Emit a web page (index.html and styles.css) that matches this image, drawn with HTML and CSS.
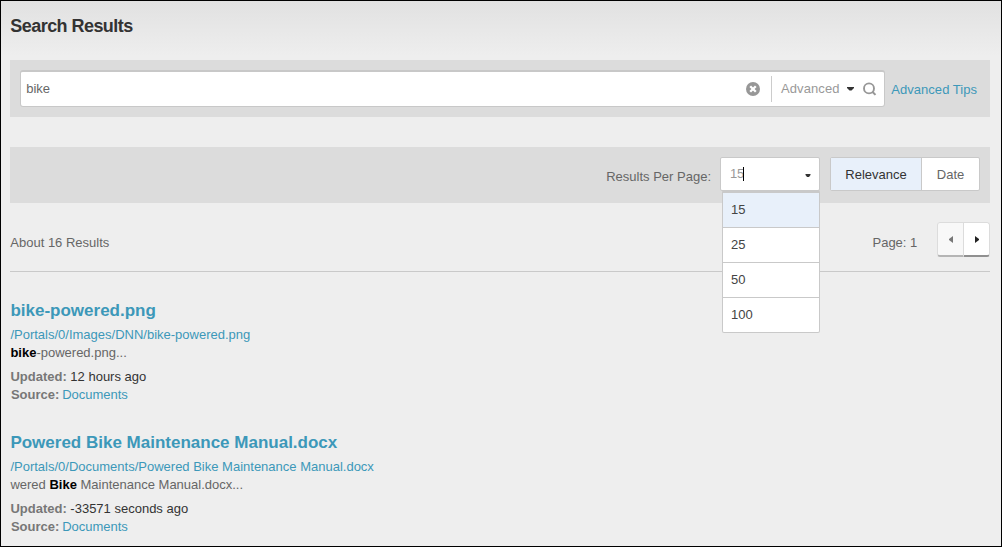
FILE: index.html
```html
<!DOCTYPE html>
<html lang="en">
<head>
<meta charset="utf-8">
<title>Search Results</title>
<link rel="stylesheet" href="styles.css">
</head>
<body>
<main class="page">
  <h1 class="heading">Search Results</h1>
  <section class="search-bar">
    <div class="search-box">
      <span class="query">bike</span>
      <svg class="clear" width="14" height="14" viewBox="0 0 14 14"><circle cx="7" cy="7" r="7" fill="#979797"/><path d="M4.2 4.2l5.6 5.6M9.8 4.2l-5.6 5.6" stroke="#fff" stroke-width="2.3"/></svg>
      <span class="advanced">Advanced</span>
      <svg class="caret" width="7" height="4" viewBox="0 0 7 4"><path d="M0 0h7v1L4.5 3.5h-2L0 1z" fill="#333"/></svg>
      <svg class="magnifier" width="14" height="14" viewBox="0 0 14 14"><circle cx="6" cy="6.4" r="5" fill="none" stroke="#979797" stroke-width="1.9"/><path d="M9.3 9.7l3.2 3.2" stroke="#979797" stroke-width="2"/></svg>
    </div>
    <a class="tips">Advanced Tips</a>
  </section>
  <section class="filter-bar">
    <span class="filter-label">Results Per Page:</span>
    <div class="select">
      <span class="select-value">15</span><span class="cursor"></span>
      <svg class="select-caret" width="6" height="4" viewBox="0 0 6 4"><path d="M0.5 0h5v1L4 3H2L0.5 1z" fill="#333"/></svg>
      <ul class="menu">
        <li class="option selected">15</li>
        <li class="option">25</li>
        <li class="option">50</li>
        <li class="option">100</li>
      </ul>
    </div>
    <div class="sort">
      <span class="sort-item active">Relevance</span>
      <span class="sort-item">Date</span>
    </div>
  </section>
  <section class="summary">
    <span class="count">About 16 Results</span>
    <span class="page-number">Page: 1</span>
    <div class="pager">
      <span class="pager-button disabled"><svg width="4" height="7" viewBox="0 0 4 7"><path d="M4 0v7L0 4V3z" fill="#777"/></svg></span>
      <span class="pager-button"><svg width="4" height="7" viewBox="0 0 4 7"><path d="M0 0v7L4 4V3z" fill="#222"/></svg></span>
    </div>
  </section>
  <article class="result">
    <h2 class="title">bike-powered.png</h2>
    <a class="path">/Portals/0/Images/DNN/bike-powered.png</a>
    <p class="snippet"><b>bike</b>-powered.png...</p>
    <p class="meta updated"><strong>Updated:</strong> 12 hours ago</p>
    <p class="meta source"><strong>Source:</strong> <a>Documents</a></p>
  </article>
  <article class="result">
    <h2 class="title">Powered Bike Maintenance Manual.docx</h2>
    <a class="path">/Portals/0/Documents/Powered Bike Maintenance Manual.docx</a>
    <p class="snippet">wered <b>Bike</b> Maintenance Manual.docx...</p>
    <p class="meta updated"><strong>Updated:</strong> -33571 seconds ago</p>
    <p class="meta source"><strong>Source:</strong> <a>Documents</a></p>
  </article>
</main>
</body>
</html>
```
FILE: styles.css
```css
* { box-sizing: border-box; }
body { margin: 0; font: 13px/18px "Liberation Sans", Arial, sans-serif; color: #666; }
h1, h2, p, ul { margin: 0; padding: 0; }
a { color: #3c98b9; }
.page {
  height: 547px;
  overflow: hidden;
  padding: 0 11px 0 9px;
  border: 1px solid #000;
  background: #eee linear-gradient(#e1e1e1, #eee 55px) no-repeat;
}
.heading { height: 59px; padding: 14px 0 0 0.3px; font-size: 18px; line-height: 22px; letter-spacing: -0.55px; color: #333; }
.search-bar { display: flex; align-items: center; height: 57px; padding-left: 10px; background: #dcdcdc; }
.search-box {
  display: flex;
  align-items: center;
  width: 865px;
  height: 37px;
  padding: 0 7px 0 5.2px;
  border: 1px solid #c8c8c8;
  border-top-width: 2px;
  border-radius: 3px;
  background: #fff;
}
.query { flex: 1; }
.clear { margin-right: 11px; }
.advanced { width: 68px; height: 26px; padding-left: 9px; border-left: 1px solid #ccc; line-height: 26px; color: #999; letter-spacing: 0.1px; white-space: nowrap; }
.caret { margin: 0 9px 0 8px; }
.tips { margin: 2px 0 0 6.2px; letter-spacing: 0.05px; }
.filter-bar { display: flex; align-items: flex-start; justify-content: flex-end; height: 56px; margin-top: 30px; padding: 10px 10px 0 0; background: #dcdcdc; }
.filter-label { margin: 11px 9px 0 0; }
.select { position: relative; display: flex; align-items: center; width: 100px; height: 34px; padding: 0 8px 0 9px; border: 1px solid #c9c9c9; border-radius: 2px; background: #fff; }
.select-value { width: 13px; color: #999; letter-spacing: -0.3px; }
.cursor { width: 1px; height: 14px; background: #000; }
.select-caret { margin: 3px 0 0 auto; }
.menu { position: absolute; top: 32px; left: 1px; width: 98px; border: 1px solid #c9c9c9; border-top-width: 3px; border-radius: 2px; background: #fff; list-style: none; color: #444; }
.option { height: 35px; padding-left: 8px; border-bottom: 1px solid #c9c9c9; line-height: 33px; }
.option:last-child { height: 34px; border-bottom: 0; }
.selected { background: #e8f0fa; }
.sort { display: flex; width: 150px; height: 34px; margin-left: 10px; border: 1px solid #c9c9c9; border-radius: 2px; background: #fff; line-height: 33px; text-align: center; }
.sort-item { flex: 1; }
.active { flex: 0 0 91px; border-right: 1px solid #c9c9c9; background: #e8f0fa; color: #333; }
.summary { display: flex; align-items: flex-start; height: 69px; padding-top: 19px; border-bottom: 1px solid #c9c9c9; }
.count { flex: 1; margin: 12px 0 0 0.3px; }
.page-number { margin: 12px 19.7px 0 0; }
.pager { display: flex; width: 53px; height: 35px; border-radius: 3px; background: #fff; }
.pager-button { display: flex; flex: 1; align-items: center; justify-content: center; border: 1px solid #dcdcdc; border-left: 0; border-bottom: 2px solid #909090; border-radius: 0 3px 3px 0; }
.disabled { flex: 0 0 27px; border-left: 1px solid #dcdcdc; border-bottom-color: #b5b5b5; border-radius: 3px 0 0 3px; background: #f8f8f8; }
.result { height: 132px; padding: 28px 0 0 0.4px; }
.title { margin-bottom: 4px; font-size: 17px; line-height: 22px; color: #3c98b9; }
.path { display: block; }
.snippet b { color: #000; }
.updated { margin-top: 6px; color: #333; }
.meta strong { color: #777; }
.source { padding-left: 0.5px; }
.source a { margin-left: -0.8px; }
```
